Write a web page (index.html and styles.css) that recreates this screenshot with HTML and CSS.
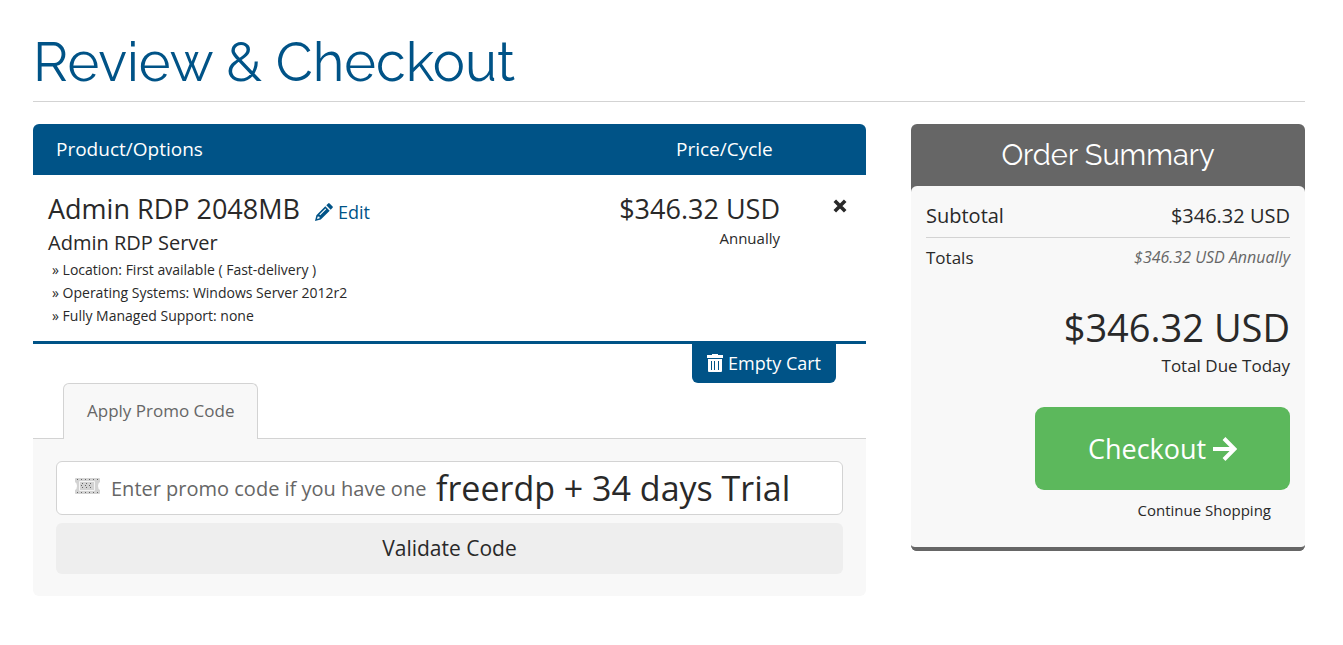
FILE: index.html
```html
<!DOCTYPE html>
<html lang="en">
<head>
<meta charset="utf-8">
<meta name="viewport" content="width=device-width, initial-scale=1">
<title>Review &amp; Checkout</title>
<link rel="stylesheet" href="styles.css">
</head>
<body>
<main class="page">
  <h1 class="page-title">Review &amp; Checkout</h1>
  <div class="columns">
    <div class="cart">
      <section class="items">
        <header class="items-head">
          <span>Product/Options</span>
          <span class="head-price">Price/Cycle</span>
        </header>
        <div class="item">
          <div class="item-info">
            <div class="item-title">
              <h2 class="item-name">Admin RDP 2048MB</h2>
              <a class="edit" href="#edit">
                <svg class="edit-icon" viewBox="0 0 18 18" aria-hidden="true"><path fill="currentColor" fill-rule="evenodd" d="M0 18 1.4 12.2 10.3 3.3 14.7 7.7 5.8 16.6ZM2 16 4.600 15.300 4.500 13.700 2.700 13.500ZM4.400 11.400 5.200 12.200 11.200 6.200 10.400 5.400ZM11.300 2.300 13.200.400Q13.900-.200 14.600.400L17.600 3.400Q18.200 4.100 17.600 4.800L15.700 6.700Z"/></svg>
                Edit
              </a>
            </div>
            <p class="item-group">Admin RDP Server</p>
            <ul class="options">
              <li>» Location: First available ( Fast-delivery )</li>
              <li>» Operating Systems: Windows Server 2012r2</li>
              <li>» Fully Managed Support: none</li>
            </ul>
          </div>
          <div class="item-price">
            <span class="price">$346.32 USD</span>
            <span class="cycle">Annually</span>
          </div>
          <button class="remove" type="button" aria-label="Remove">
            <svg class="remove-icon" viewBox="0 0 14 14" aria-hidden="true"><path stroke="currentColor" stroke-width="3.6" d="M1.8 1.8 12.2 12.2M12.2 1.8 1.8 12.2"/></svg>
          </button>
        </div>
      </section>
      <div class="cart-actions">
        <button class="empty-cart" type="button">
          <svg class="trash-icon" viewBox="0 0 16 18" aria-hidden="true"><path fill="currentColor" fill-rule="evenodd" d="M0 1H5V0H11V1H16V4H0ZM1 5H15V17Q15 18 14 18H2Q1 18 1 17ZM4 7V16H5V7ZM7 7V16H8V7ZM11 7V16H12V7Z"/></svg>
          Empty Cart
        </button>
      </div>
      <section class="promo">
        <div class="tabs"><button class="tab" type="button">Apply Promo Code</button></div>
        <form class="promo-panel">
          <div class="promo-field">
            <svg class="ticket-icon" viewBox="0 0 25 18" aria-hidden="true"><path fill="#d3d3d3" d="M1 1H24Q25 1 25 2V5Q23 6 23 9T25 13V16Q25 17 24 17H1Q0 17 0 16V13Q2 12 2 9T0 5V2Q0 1 1 1Z"/><path fill="none" stroke="#f4f4f4" d="M4.500 4.500H19.500V13.500H4.500Z"/><path fill="none" stroke="#666" stroke-dasharray="1 3" d="M2 2.500H23M2 15.500H23M7 6.500H17M6 8.500H18M7 10.500H17"/></svg>
            <input class="promo-input" type="text" aria-label="Promo code" placeholder="Enter promo code if you have one">
            <span class="promo-note">freerdp + 34 days Trial</span>
          </div>
          <button class="validate" type="button">Validate Code</button>
        </form>
      </section>
    </div>
    <aside class="summary">
      <h2 class="summary-title">Order Summary</h2>
      <div class="summary-body">
        <div class="row subtotal"><span>Subtotal</span><span>$346.32 USD</span></div>
        <div class="row totals"><span>Totals</span><em class="recurring">$346.32 USD Annually</em></div>
        <div class="due">$346.32 USD</div>
        <div class="due-label">Total Due Today</div>
        <button class="checkout" type="button">
          Checkout
          <svg class="arrow-icon" viewBox="0 0 24 24" aria-hidden="true"><path fill="none" stroke="currentColor" stroke-width="4" d="M0 12H21M11 1.500 21.500 12 11 22.500"/></svg>
        </button>
        <a class="continue" href="#shop">Continue Shopping</a>
      </div>
    </aside>
  </div>
</main>
</body>
</html>
```
FILE: styles.css
```css
* { box-sizing: border-box; }
body {
  margin: 0;
  background: #fff;
  color: #292929;
  font-family: "Open Sans", "Noto Sans", sans-serif;
  font-size: 17px;
}
h1, h2, p, ul { margin: 0; padding: 0; font-weight: 400; }
button, input { font: inherit; color: inherit; border: 0; }
button { cursor: pointer; }
svg { flex: none; }
.page { padding: 26px 38px 24px 33px; }
.page-title {
  padding-bottom: 3px;
  border-bottom: 1px solid #d3d3d3;
  color: #005387;
  font: 400 54px/72px Raleway, Lato, sans-serif;
}
.columns {
  display: grid;
  grid-template-columns: 833fr 394fr;
  gap: 45px;
  align-items: start;
  margin-top: 22px;
}
.items { border-bottom: 3px solid #005387; }
.items-head {
  display: grid;
  grid-template-columns: 1fr 190px;
  padding: 12px 0 13px 23px;
  border-radius: 6px 6px 0 0;
  background: #005387;
  color: #fff;
  font-size: 19px;
  line-height: 26px;
}
.item {
  display: grid;
  grid-template-columns: 1fr auto 86px;
  padding: 15px 0 14px 15px;
}
.item-title { display: flex; align-items: center; gap: 15px; }
.item-name { font-size: 27px; line-height: 38px; }
.edit {
  display: flex;
  align-items: center;
  gap: 5px;
  padding-top: 6px;
  color: #005387;
  font-size: 18px;
  line-height: 26px;
  text-decoration: none;
}
.edit-icon { width: 18px; height: 18px; }
.item-group { font-size: 20px; line-height: 30px; }
.options { padding-left: 4px; list-style: none; font-size: 14px; line-height: 23px; }
.item-price { text-align: right; }
.price { display: block; font-size: 27px; line-height: 38px; }
.cycle { display: block; font-size: 15px; line-height: 20px; }
.remove { align-self: start; justify-self: center; padding: 9px 8px; margin-left: 34px; background: none; }
.remove-icon { display: block; width: 14px; height: 14px; }
.cart-actions { display: flex; justify-content: flex-end; padding-right: 30px; }
.empty-cart {
  display: flex;
  align-items: center;
  gap: 5px;
  height: 39px;
  padding: 0 15px 2px;
  border-radius: 0 0 6px 6px;
  background: #005387;
  color: #fff;
  font-size: 18px;
}
.trash-icon { width: 16px; height: 18px; }
.tabs { display: flex; padding-left: 30px; border-bottom: 1px solid #d3d3d3; }
.tab {
  height: 56px;
  margin-bottom: -1px;
  padding: 0 23px 2px;
  border: 1px solid #d3d3d3;
  border-bottom: 0;
  border-radius: 6px 6px 0 0;
  background: #f8f8f8;
  color: #666;
}
.promo-panel {
  display: grid;
  gap: 8px;
  padding: 22px 23px;
  border-radius: 0 0 6px 6px;
  background: #f8f8f8;
}
.promo-field {
  display: flex;
  align-items: center;
  height: 54px;
  padding: 0 18px;
  border: 1px solid #d3d3d3;
  border-radius: 6px;
  background: #fff;
}
.ticket-icon { width: 25px; height: 18px; margin-bottom: 4px; }
.promo-input { width: 336px; padding: 0 0 0 11px; outline: 0; background: none; font-size: 20px; }
.promo-input::placeholder { color: #666; opacity: 1; }
.promo-note { font-size: 34px; line-height: 48px; white-space: nowrap; }
.validate { height: 51px; padding-bottom: 3px; border-radius: 6px; background: #eee; font-size: 21px; }
.summary { border-radius: 6px; background: #666; }
.summary-title {
  color: #fff;
  font: 400 29px/62px Raleway, Lato, sans-serif;
  text-align: center;
}
.summary-body {
  display: flex;
  flex-direction: column;
  padding: 14px 15px 24px;
  border-bottom: 4px solid #666;
  border-radius: 6px;
  background: #f8f8f8;
}
.row { display: flex; justify-content: space-between; }
.subtotal { padding-bottom: 5px; border-bottom: 1px solid #d3d3d3; font-size: 20px; line-height: 32px; }
.totals { padding-top: 6px; line-height: 28px; }
.recurring { color: #666; font-size: 16px; line-height: 26px; }
.due { margin-top: 28px; font-size: 38px; line-height: 54px; text-align: right; }
.due-label { line-height: 24px; text-align: right; }
.checkout {
  display: flex;
  align-items: center;
  justify-content: center;
  align-self: flex-end;
  gap: 7px;
  width: 70%;
  height: 83px;
  margin-top: 29px;
  border-radius: 9px;
  background: #5cb85c;
  color: #fff;
  font-size: 27px;
}
.arrow-icon { width: 24px; height: 24px; }
.continue {
  align-self: flex-end;
  margin-top: 7px;
  padding-right: 19px;
  color: inherit;
  font-size: 15px;
  line-height: 26px;
  text-decoration: none;
}
```
